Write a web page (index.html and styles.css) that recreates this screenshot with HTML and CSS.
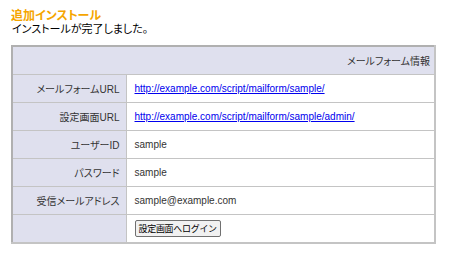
FILE: index.html
```html
<!DOCTYPE html>
<html lang="ja">
<head>
    <meta charset="UTF-8">
    <title>追加インストール</title>
    <link rel="stylesheet" href="styles.css">
</head>
<body>
    <h1 class="title">追加インストール</h1>
    <p class="message">インストールが完了しました。</p>
    <table class="info">
        <colgroup>
            <col class="label-col">
            <col>
        </colgroup>
        <tr>
            <th class="caption" colspan="2">メールフォーム情報</th>
        </tr>
        <tr>
            <th>メールフォームURL</th>
            <td><a href="#">http://example.com/script/mailform/sample/</a></td>
        </tr>
        <tr>
            <th>設定画面URL</th>
            <td><a href="#">http://example.com/script/mailform/sample/admin/</a></td>
        </tr>
        <tr>
            <th>ユーザーID</th>
            <td>sample</td>
        </tr>
        <tr>
            <th>パスワード</th>
            <td>sample</td>
        </tr>
        <tr>
            <th>受信メールアドレス</th>
            <td>sample@example.com</td>
        </tr>
        <tr>
            <th></th>
            <td><button class="login">設定画面へログイン</button></td>
        </tr>
    </table>
</body>
</html>
```

FILE: styles.css
```css
body {
    margin: 0;
    padding: 10px 11px;
    font-family: "Liberation Sans", "Noto Sans CJK JP", sans-serif;
    font-size: 11px;
    color: #000;
    background: #fff;
    font-feature-settings: "palt";
}

.title {
    margin: 0;
    font-size: 12px;
    font-weight: bold;
    line-height: 12px;
    color: #f5a500;
}

.message {
    margin: 1px 0 10px 1px;
    line-height: 12px;
}

.info {
    width: 425px;
    border-collapse: collapse;
    border: 2px solid #c4c4c4;
    border-top-color: #b0b0b0;
    border-left-color: #b0b0b0;
    font-size: 10px;
    table-layout: fixed;
}

.label-col {
    width: 114px;
}

.info th,
.info td {
    height: 27px;
    padding: 0 8px;
    border: 1px solid #c4c4c4;
    font-weight: normal;
    color: #333;
    white-space: nowrap;
}

.info th {
    text-align: right;
    background: #dfe0ee;
    padding-right: 6px;
}

.info th.caption {
    padding-right: 4px;
}

.info td {
    background: #fff;
}

.info a {
    color: #0000ee;
}

.login {
    font-family: inherit;
    font-size: 9px;
    letter-spacing: -0.3px;
    color: #000;
    padding: 1px 3px;
    background: #f1f1f1;
    border: 1px solid #707070;
    border-radius: 2px;
}
```
